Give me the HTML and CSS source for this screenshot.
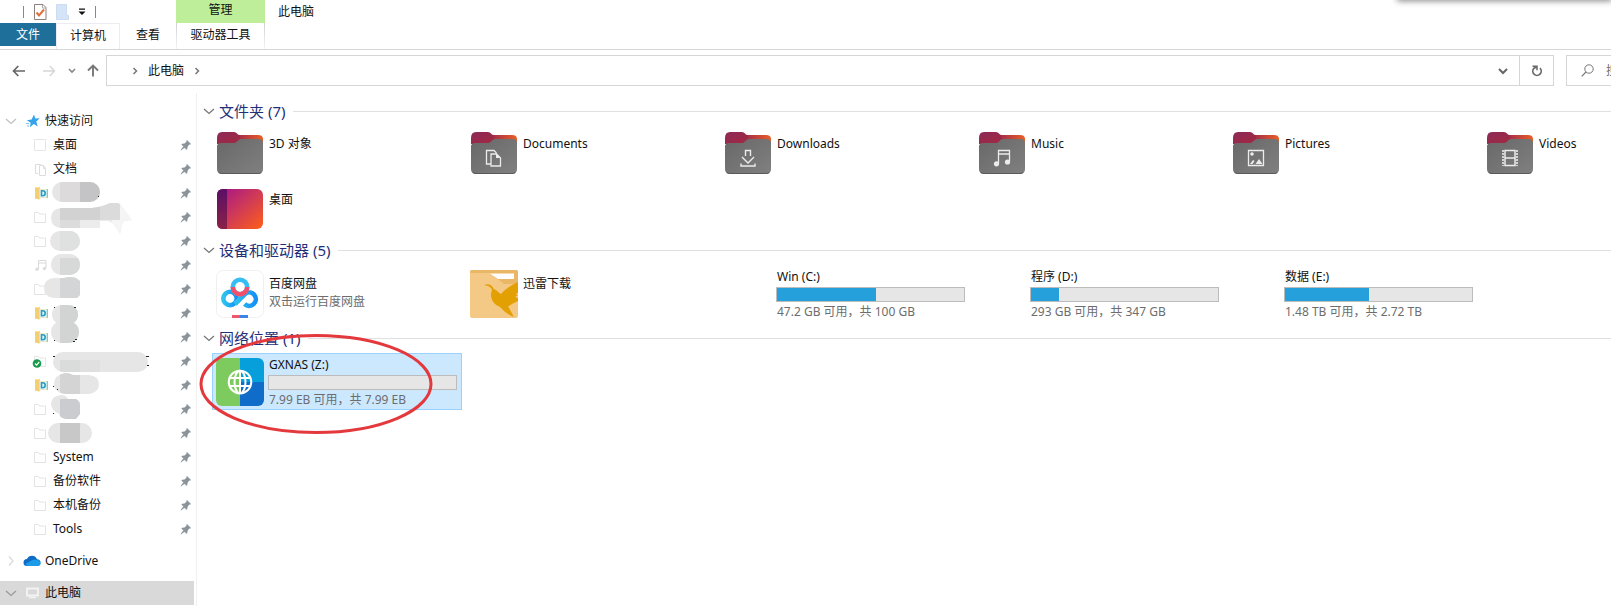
FILE: index.html
```
<!DOCTYPE html>
<html lang="zh-CN">
<head>
<meta charset="utf-8">
<title>此电脑</title>
<link rel="stylesheet" href="styles.css">
</head>
<body>
<svg class="defs" aria-hidden="true">
  <defs>
    <linearGradient id="g-back" x1="0" y1="0" x2="1" y2="0"><stop offset="0" stop-color="#8a2250"/><stop offset=".5" stop-color="#a83048"/><stop offset="1" stop-color="#ea5f25"/></linearGradient>
    <linearGradient id="g-tab" x1="0" y1="0" x2="1" y2="1"><stop offset="0" stop-color="#8c2a58"/><stop offset="1" stop-color="#a3283f"/></linearGradient>
    <linearGradient id="g-front" x1="0" y1="0" x2="1" y2="1"><stop offset="0" stop-color="#686868"/><stop offset="1" stop-color="#808080"/></linearGradient>
    <linearGradient id="g-desk" x1="0" y1="0" x2="1" y2="1"><stop offset="0" stop-color="#a3128c"/><stop offset=".5" stop-color="#cf3a57"/><stop offset="1" stop-color="#ff5f17"/></linearGradient>
    <linearGradient id="g-side" x1="0" y1="0" x2="0" y2="1"><stop offset="0" stop-color="#5b0f66"/><stop offset="1" stop-color="#8a2148"/></linearGradient>
    <linearGradient id="g-cloud" x1="0" y1="0" x2="1" y2="0"><stop offset="0" stop-color="#2fc4ee"/><stop offset="1" stop-color="#1590f5"/></linearGradient>
    <symbol id="folder" viewBox="0 0 48 48">
      <path d="M6 6h36q5 0 5 4v8H1z" fill="url(#g-back)"/>
      <path d="M1 9q0-6 5-6h12q2 0 3 1.500 1 1.500 3 1.500v6l-6 3H1z" fill="url(#g-tab)"/>
      <path d="M1 18q0-4 4-4h13q2 0 3.500-2t3.500-2h18q4 0 4 4v26q0 5-5 5H6q-5 0-5-5z" fill="url(#g-front)"/>
      <path d="M3 43.500q1.500 1 3 1h36q2 0 3-1" fill="none" stroke="#5a5a5a"/>
    </symbol>
    <symbol id="pin" viewBox="0 0 12 12">
      <path d="M7 1l4 4-1 .8-.8-.2L7.500 8l-.2 2.200-.9.600L1.400 5.600l.6-.8L4.500 4.600 6.600 2.600l-.3-.8zM3.500 7.200l1.400 1.400L1 11.500.700 11z" fill="#8c9399"/>
    </symbol>
    <symbol id="dir" viewBox="0 0 14 14"><path d="M.500 2.500h4l1 1.500h6v8.500H.500z" fill="#fff" stroke="#e4e4e4"/></symbol>
    <symbol id="zdir" viewBox="0 0 14 14">
      <path d="M1 1.500l5-.8V3h6v9H6v1.500l-5-1z" fill="#fbdc86"/><path d="M1 1.500l4 1v11l-4-1z" fill="#f3cf74"/>
      <path d="M6 3.500h7v8H6z" fill="#e5f4fa"/><path d="M7.500 4.800v5h1q2.700 0 2.700-2.500T8.500 4.800z" fill="none" stroke="#2f9cc4" stroke-width="1.600"/><path d="M13.300 3v9" stroke="#76c9a4" stroke-width="1.200"/>
    </symbol>
    <symbol id="tune" viewBox="0 0 14 14"><path d="M4.500 11V2.500h7.500V10M4.500 5H12" fill="none" stroke="#d9d9d9"/><circle cx="3" cy="11.300" r="1.700" fill="#ddd"/><circle cx="10.500" cy="10.500" r="1.700" fill="#ddd"/></symbol>
    <symbol id="open" viewBox="0 0 12 12"><path d="M1 4l5 4.500L11 4" fill="none" stroke="currentColor" stroke-width="1.300"/></symbol>
    <symbol id="closed" viewBox="0 0 12 12"><path d="M4 1.500L8 6l-4 4.500" fill="none" stroke="currentColor" stroke-width="1.300"/></symbol>
  </defs>
</svg>

<header class="ribbon">
  <div class="ribbon-left">
    <div class="quick-bar">
      <span class="sep"></span>
      <button class="icon-btn" aria-label="属性"><svg width="14" height="16" viewBox="0 0 14 16"><path d="M1.500.500h8.500l3 3v12H1.500z" fill="#fff" stroke="#8d7f7a"/><path d="M9.500 1v3h3.500" fill="none" stroke="#aaa"/><path d="M3.500 8.500l2.500 3 5-6" fill="none" stroke="#e2703a" stroke-width="2"/></svg></button>
      <button class="icon-btn" aria-label="新建文件夹"><svg width="13" height="16" viewBox="0 0 13 16"><path d="M.500 .500h10v10l2 1v4H.500z" fill="#d5e5f7" stroke="#c9dcf1"/></svg></button>
      <button class="icon-btn" aria-label="自定义快速访问工具栏"><svg width="8" height="8" viewBox="0 0 8 8"><path d="M1 .500h6v1.300H1zM.500 3.500h7L4 7z" fill="#111"/></svg></button>
      <span class="sep"></span>
    </div>
    <div class="tabs">
      <button class="tab tab-file">文件</button>
      <button class="tab tab-computer">计算机</button>
      <button class="tab tab-view">查看</button>
    </div>
  </div>
  <div class="context">
    <div class="context-title">管理</div>
    <button class="tab tab-tools">驱动器工具</button>
  </div>
  <h1 class="window-title">此电脑</h1>
</header>
<div class="window-shadow"></div>

<div class="navbar">
  <div class="nav-buttons">
    <button class="icon-btn" aria-label="后退"><svg width="14" height="12" viewBox="0 0 14 12"><path d="M13 6H1.500M6.300 1L1.500 6l4.800 5" fill="none" stroke="#666" stroke-width="1.700"/></svg></button>
    <button class="icon-btn fwd" aria-label="前进"><svg width="14" height="12" viewBox="0 0 14 12"><path d="M1 6h11.500M7.700 1l4.800 5-4.800 5" fill="none" stroke="#d6d6d6" stroke-width="1.400"/></svg></button>
    <button class="icon-btn recent" aria-label="最近浏览的位置"><svg width="8" height="8" viewBox="0 0 8 8"><path d="M1 2l3 3 3-3" fill="none" stroke="#888" stroke-width="1.600"/></svg></button>
    <button class="icon-btn" aria-label="上移"><svg width="12" height="13" viewBox="0 0 12 13"><path d="M6 12.500V1.500M1 6.500l5-5 5 5" fill="none" stroke="#777" stroke-width="1.900"/></svg></button>
  </div>
  <nav class="address" aria-label="地址">
    <svg class="crumb-sep" width="8" height="8" viewBox="0 0 8 8"><path d="M2.500 1l3 3-3 3" fill="none" stroke="#777" stroke-width="1.500"/></svg>
    <button class="crumb">此电脑</button>
    <svg class="crumb-sep" width="8" height="8" viewBox="0 0 8 8"><path d="M2.500 1l3 3-3 3" fill="none" stroke="#777" stroke-width="1.500"/></svg>
    <button class="icon-btn history" aria-label="以前的位置"><svg width="10" height="8" viewBox="0 0 10 8"><path d="M1 2l4 4 4-4" fill="none" stroke="#666" stroke-width="2"/></svg></button>
    <button class="icon-btn refresh" aria-label="刷新"><svg width="12" height="12" viewBox="0 0 12 12"><path d="M9 3.200a4.200 4.200 0 1 1-6 0L6 1.800" fill="none" stroke="#6a6a6a" stroke-width="1.700"/><path d="M1.500 1.300H6v4" fill="none" stroke="#6a6a6a" stroke-width="1.500"/></svg></button>
  </nav>
  <label class="search">
    <svg width="13" height="13" viewBox="0 0 13 13"><circle cx="8" cy="5" r="4.200" fill="none" stroke="#777"/><path d="M5 8L.700 12.300" stroke="#777" stroke-width="1.200"/></svg>
    <input type="text" placeholder="搜索“此电脑”" aria-label="搜索">
  </label>
</div>

<div class="body">
  <aside class="sidebar">
    <a class="row top" href="#"><svg class="chev" width="12" height="12"><use href="#open"/></svg><svg class="top-icon" width="14" height="14" viewBox="0 0 14 14"><path d="M8 .500l1.300 4 4.400-.2-3.400 3.200 1.400 5L7.800 10l-4 3.300.9-4.600L.800 6.200l4.800-.7z" fill="#35a3ec"/><path d="M0 9.500h3M1 12h2" stroke="#7cc3f3"/></svg>快速访问</a>
    <a class="row" href="#"><svg width="14" height="14" viewBox="0 0 14 14"><path d="M.500 1.500h11v11H.500z" fill="#fff" stroke="#e6e6e6"/></svg>桌面<svg class="pin" width="12" height="12"><use href="#pin"/></svg></a>
    <a class="row" href="#"><svg width="14" height="14" viewBox="0 0 14 14"><path d="M4 11.500H1.500v-9H7M5.500 3.500h4l2 3v7h-6zM9.500 3.500v3h2" fill="none" stroke="#dcdcdc"/></svg>文档<svg class="pin" width="12" height="12"><use href="#pin"/></svg></a>
    <a class="row" href="#" aria-label="文件夹"><svg width="14" height="14"><use href="#zdir"/></svg><svg class="pin" width="12" height="12"><use href="#pin"/></svg></a>
    <a class="row" href="#" aria-label="文件夹"><svg width="14" height="14"><use href="#dir"/></svg><svg class="pin" width="12" height="12"><use href="#pin"/></svg></a>
    <a class="row" href="#" aria-label="文件夹"><svg width="14" height="14"><use href="#dir"/></svg><svg class="pin" width="12" height="12"><use href="#pin"/></svg></a>
    <a class="row" href="#" aria-label="音乐"><svg width="14" height="14"><use href="#tune"/></svg><svg class="pin" width="12" height="12"><use href="#pin"/></svg></a>
    <a class="row" href="#" aria-label="文件夹"><svg width="14" height="14"><use href="#dir"/></svg><svg class="pin" width="12" height="12"><use href="#pin"/></svg></a>
    <a class="row" href="#" aria-label="文件夹"><svg width="14" height="14"><use href="#zdir"/></svg><svg class="pin" width="12" height="12"><use href="#pin"/></svg></a>
    <a class="row" href="#" aria-label="文件夹"><svg width="14" height="14"><use href="#zdir"/></svg><svg class="pin" width="12" height="12"><use href="#pin"/></svg></a>
    <a class="row" href="#" aria-label="文件夹"><svg class="synced" width="14" height="14" viewBox="0 0 14 14"><use href="#dir" width="14" height="14"/><circle cx="3" cy="9.500" r="4.300" fill="#169a4b"/><path d="M1 9.500l1.600 1.600L5.200 8" fill="none" stroke="#fff" stroke-width="1.200"/></svg><svg class="pin" width="12" height="12"><use href="#pin"/></svg></a>
    <a class="row" href="#" aria-label="文件夹"><svg width="14" height="14"><use href="#zdir"/></svg><svg class="pin" width="12" height="12"><use href="#pin"/></svg></a>
    <a class="row" href="#" aria-label="文件夹"><svg width="14" height="14"><use href="#dir"/></svg><svg class="pin" width="12" height="12"><use href="#pin"/></svg></a>
    <a class="row" href="#" aria-label="文件夹"><svg width="14" height="14"><use href="#dir"/></svg><svg class="pin" width="12" height="12"><use href="#pin"/></svg></a>
    <a class="row" href="#"><svg width="14" height="14"><use href="#dir"/></svg>System<svg class="pin" width="12" height="12"><use href="#pin"/></svg></a>
    <a class="row" href="#"><svg width="14" height="14"><use href="#dir"/></svg>备份软件<svg class="pin" width="12" height="12"><use href="#pin"/></svg></a>
    <a class="row" href="#"><svg width="14" height="14"><use href="#dir"/></svg>本机备份<svg class="pin" width="12" height="12"><use href="#pin"/></svg></a>
    <a class="row" href="#"><svg width="14" height="14"><use href="#dir"/></svg>Tools<svg class="pin" width="12" height="12"><use href="#pin"/></svg></a>
    <a class="row top spaced" href="#"><svg class="chev faint" width="12" height="12"><use href="#closed"/></svg><svg class="top-icon wide" width="18" height="12" viewBox="0 0 18 12"><path d="M4 11Q.500 11 .500 7.500T4 4Q5.500.800 9 .800t5 3.400q3.500.3 3.500 3.500T14 11z" fill="#0f6cc4"/><path d="M5.500 11q-3-.3-2.500-2.500L9.500 5q2-1 4 0 4 0 4 3t-3.500 3z" fill="#1b9be8"/></svg>OneDrive</a>
    <a class="row top spaced selected" href="#"><svg class="chev dark" width="12" height="12"><use href="#open"/></svg><svg class="top-icon" width="14" height="12" viewBox="0 0 14 12"><path d="M1 1.500h11v7H1z" fill="#d9d9d9" stroke="#f3f3f3" stroke-width="1.800"/><path d="M3 10.500h7" stroke="#f3f3f3" stroke-width="1.500"/></svg>此电脑</a>

    <!-- Mosaic over private folder names -->
    <svg class="mosaic" width="150" height="270" viewBox="0 180 150 270" aria-hidden="true">
      <clipPath id="blobs">
        <rect x="52" y="182" width="48" height="20" rx="10"/>
        <path d="M61 208H92Q102 207 110 203H118Q121 204 123 208L132 220 124 221 122 224 120 234 113 223 108 221H100V228H61Q51 227 51 218T61 208z"/>
        <rect x="50" y="231" width="30" height="20" rx="10"/>
        <rect x="51" y="254" width="29" height="21" rx="10"/>
        <path d="M54 278h10q6-2 12 0l4 3v14l-3 3H54q-10-1-10-10t10-10z"/>
        <rect x="52" y="305" width="26" height="19" rx="9"/>
        <rect x="51" y="321" width="28" height="22" rx="11"/>
        <rect x="53" y="352" width="95" height="20" rx="10"/>
        <path d="M65 373q5 0 8 2h16q10 1 10 9t-10 10H67q-13-1-13-10t11-11z"/>
        <path d="M61 395q5 0 7 4h8q4 2 4 6v9l-4 5H66q-6-1-7-5-8-4-8-10 0-8 10-9z"/>
        <rect x="48" y="423" width="44" height="20" rx="10"/>
      </clipPath>
      <g clip-path="url(#blobs)">
        <path d="M40 180h110v270H40z" fill="#e6e6e6"/>
        <path d="M60 180h20v23H60z" fill="#dcdadb"/><path d="M80 180h20v23H80z" fill="#c4c4c6"/>
        <path d="M60 203h40v17H60z" fill="#d2d2d3"/><path d="M60 220h20v9H60z" fill="#dcdcdd"/><path d="M100 203h20v17h-20z" fill="#dbdbdc"/><path d="M80 220h32v9H80z" fill="#ececec"/><path d="M120 203h15v35h-23v-18h8z" fill="#f5f5f5"/>
        <path d="M60 230h20v22H60z" fill="#dfe0e0"/><path d="M60 258h20v18H60z" fill="#d7d8d8"/>
        <path d="M60 277h20v22H60z" fill="#d4d5d6"/><path d="M60 304h20v40H60z" fill="#d2d3d3"/>
        <path d="M60 360h20v12H60z" fill="#dadbdb"/><path d="M80 360h20v12H80z" fill="#e0e0e0"/>
        <path d="M60 372h20v22H60z" fill="#d4d4d5"/><path d="M60 399h20v21H60z" fill="#cbccd0"/><path d="M60 422h20v22H60z" fill="#c8c8c8"/>
      </g>
      <path d="M98 196h1v1h-1zM54 307h1v1h-1zM74 307h2v1h-2zM75 339h2v1h-2zM73 341h2v1h-2zM54 340h1v1h-1zM53 356h2v1h-2zM146 356h3v1h-3zM147 365h2v1h-2zM53 386h1v1h-1zM57 389h1v1h-1zM53 413h1v1h-1z" fill="#222"/>
    </svg>
  </aside>

  <main class="content">
    <section class="group">
      <h2 class="group-title"><svg width="12" height="12"><use href="#open"/></svg>文件夹 (7)</h2>
      <div class="grid folders">
        <div class="tile"><svg class="icon" width="48" height="48"><use href="#folder"/></svg><span class="name">3D 对象</span></div>
        <div class="tile"><svg class="icon" width="48" height="48" viewBox="0 0 48 48"><use href="#folder" width="48" height="48"/><path d="M20.500 35H16.500V21.500H24l2.500 2.500M21 25h5.500l4 4v8H21z" fill="none" stroke="#ececec" stroke-width="1.300"/><path d="M26 24.500V29h4.500z" fill="#ececec"/></svg><span class="name">Documents</span></div>
        <div class="tile"><svg class="icon" width="48" height="48" viewBox="0 0 48 48"><use href="#folder" width="48" height="48"/><path d="M21.500 27v-5.500h5V27M18 28l6 6 6-6M17 34.500V37h14v-2.500" fill="none" stroke="#ececec" stroke-width="1.400"/></svg><span class="name">Downloads</span></div>
        <div class="tile"><svg class="icon" width="48" height="48" viewBox="0 0 48 48"><use href="#folder" width="48" height="48"/><path d="M20.500 34.500V21.500h11v11M20.500 25h11" fill="none" stroke="#ececec" stroke-width="1.300"/><circle cx="18.500" cy="34.800" r="2.600" fill="#ececec"/><circle cx="29.500" cy="33" r="2.600" fill="#ececec"/></svg><span class="name">Music</span></div>
        <div class="tile"><svg class="icon" width="48" height="48" viewBox="0 0 48 48"><use href="#folder" width="48" height="48"/><path d="M16.500 21.500h15v15h-15z" fill="none" stroke="#ececec" stroke-width="1.300"/><circle cx="20" cy="25" r="1.800" fill="#ececec"/><path d="M18 35l3-4 1.500 1-2 3zM23.500 35l3.500-5 3.500 5z" fill="#ececec"/></svg><span class="name">Pictures</span></div>
        <div class="tile"><svg class="icon" width="48" height="48" viewBox="0 0 48 48"><use href="#folder" width="48" height="48"/><path d="M19 21.500h10v15H19zM19 29h10" fill="none" stroke="#ececec" stroke-width="1.500"/><path d="M17 21v16M31 21v16" stroke="#ececec" stroke-width="1.600" stroke-dasharray="2 1"/></svg><span class="name">Videos</span></div>
        <div class="tile"><svg class="icon" width="48" height="48" viewBox="0 0 48 48"><rect x="1" y="4" width="46" height="40" rx="6" fill="url(#g-desk)"/><path d="M11 4H7Q1 4 1 10v28q0 6 6 6h4z" fill="url(#g-side)"/></svg><span class="name">桌面</span></div>
      </div>
    </section>

    <section class="group">
      <h2 class="group-title"><svg width="12" height="12"><use href="#open"/></svg>设备和驱动器 (5)</h2>
      <div class="grid devices">
        <div class="tile"><svg class="icon" width="48" height="48" viewBox="0 0 48 48"><rect x=".5" y=".5" width="47" height="47" rx="7" fill="#fff" stroke="#f0f0f0"/><g fill="none" stroke-width="4.600"><circle cx="14" cy="28.500" r="6.700" stroke="url(#g-cloud)"/><path d="M28.500 34a6.700 6.700 0 1 0 1-10.500L19 34" stroke="url(#g-cloud)"/><circle cx="24" cy="17" r="7.200" stroke="#36bdf2"/><path d="M16.800 17a7.200 7.200 0 0 0 14.400 0" stroke="#f0506c"/></g><path d="M16 45h8v3h-8z" fill="#f0566c"/><path d="M24 45h8v3h-8z" fill="#3b85e8"/></svg><span class="name">百度网盘</span><span class="detail">双击运行百度网盘</span></div>
        <div class="tile"><svg class="icon" width="48" height="48" viewBox="0 0 48 48"><rect width="48" height="48" rx="2" fill="#f4c986"/><path d="M0 2q0-2 2-2h44q2 0 2 2v12H34L20 3H0z" fill="#e9b765"/><path d="M20 3.500h24v5.500H28z" fill="#fff"/><path d="M14 15q5-2 8 1 1 3 4 4 3 3 5 4 6-7 17-12v11l-3 1 3 1-3 2 3 1v3l-6 3q-2 2-4 2l6 11q-8-3-14-10-8-3-9-11 0-4 1-6-1-4-8-5z" fill="#e3a003"/></svg><span class="name">迅雷下载</span></div>
        <div class="tile drive"><span class="name">Win (C:)</span><span class="bar"><span class="fill" style="width:53%"></span></span><span class="detail">47.2 GB 可用，共 100 GB</span></div>
        <div class="tile drive"><span class="name">程序 (D:)</span><span class="bar"><span class="fill" style="width:15%"></span></span><span class="detail">293 GB 可用，共 347 GB</span></div>
        <div class="tile drive"><span class="name">数据 (E:)</span><span class="bar"><span class="fill" style="width:45%"></span></span><span class="detail">1.48 TB 可用，共 2.72 TB</span></div>
      </div>
    </section>

    <section class="group">
      <h2 class="group-title"><svg width="12" height="12"><use href="#open"/></svg>网络位置 (1)</h2>
      <div class="grid">
        <div class="tile drive picked">
          <svg class="icon" width="48" height="48" viewBox="0 0 48 48"><clipPath id="net"><rect width="48" height="48" rx="6"/></clipPath><g clip-path="url(#net)"><path d="M0 0h24v48H0z" fill="#7dca5e"/><path d="M24 0h24v24H24z" fill="#069fdb"/><path d="M24 24h24v24H24z" fill="#0f6cc8"/></g><g fill="none" stroke="#fff" stroke-width="2"><circle cx="24" cy="24" r="11.300"/><ellipse cx="24" cy="24" rx="5.500" ry="11.300"/><path d="M24 12.500v23M13.500 20h21M13.500 28h21"/></g></svg>
          <span class="name">GXNAS (Z:)</span><span class="bar"></span><span class="detail">7.99 EB 可用，共 7.99 EB</span>
          <svg class="ring" width="234" height="102" viewBox="0 0 234 102" aria-hidden="true"><ellipse cx="117" cy="51" rx="115" ry="48.500" fill="none" stroke="#e4393c" stroke-width="3"/></svg>
        </div>
      </div>
    </section>
  </main>
</div>
</body>
</html>
```

FILE: styles.css
```
* { box-sizing: border-box; }

html, body {
  height: 100%;
  margin: 0;
  overflow: hidden;
}

body {
  display: flex;
  flex-direction: column;
  background: #fff;
  color: #111;
  font: 12px/16px "Noto Sans", "Noto Sans CJK SC", sans-serif;
}

button, input {
  margin: 0;
  padding: 0;
  border: 0;
  background: none;
  color: inherit;
  font: inherit;
}

a { color: inherit; text-decoration: none; }
svg { display: block; flex: none; }
.defs { position: absolute; width: 0; height: 0; }
.icon-btn { display: flex; align-items: center; justify-content: center; }

/* Ribbon */
.ribbon {
  display: flex;
  flex: none;
  height: 50px;
  border-bottom: 1px solid #d6d6d8;
}
.ribbon-left { width: 176px; }
.quick-bar {
  display: flex;
  align-items: center;
  gap: 9px;
  height: 23px;
  padding-left: 23px;
}
.sep { width: 1px; height: 12px; background: #888; }
.tabs { display: flex; height: 26px; }
.tab { padding-bottom: 2px; text-align: center; }
.tab-file { width: 56px; height: 23px; padding: 0; background: #1f6f9b; color: #fff; }
.tab-computer { width: 64px; border: 1px solid #ececf2; border-bottom: 0; }
.tab-view { flex: 1; }
.context { display: flex; flex-direction: column; width: 89px; }
.context-title {
  height: 23px;
  padding-top: 2px;
  background: #beee99;
  text-align: center;
}
.tab-tools {
  height: 26px;
  border: solid;
  border-width: 0 1px;
  border-image: linear-gradient(#cfcfd6, #f6f6f6) 1;
}
.window-title { margin: 4px 0 0 13px; font: inherit; }
.window-shadow {
  position: absolute;
  top: -8px;
  right: 0;
  left: 1398px;
  height: 8px;
  box-shadow: 0 0 6px 1px #888;
}

/* Navigation */
.navbar {
  display: flex;
  flex: none;
  padding-top: 5px;
}
.nav-buttons {
  display: flex;
  align-items: center;
  width: 106px;
  padding-left: 12px;
}
.fwd { margin-left: 16px; }
.recent { margin: 0 11px 0 12px; }
.address {
  display: flex;
  flex: 1;
  align-items: center;
  height: 31px;
  padding-left: 24px;
  border: 1px solid #d6d6d6;
}
.crumb { margin: 0 9px; }
.history { height: 100%; margin-left: auto; padding: 0 11px; }
.refresh { width: 34px; height: 100%; border-left: 1px solid #d6d6d6; }
.search {
  display: flex;
  align-items: center;
  width: 45px;
  height: 31px;
  margin-left: 12px;
  padding-left: 14px;
  overflow: hidden;
  border: 1px solid #d6d6d6;
  border-right: 0;
}
.search input { flex: 1; min-width: 0; margin-left: 12px; outline: 0; }
.search input::placeholder { color: #6d6d6d; opacity: 1; }

/* Sidebar */
.body { display: flex; flex: 1; min-height: 0; padding-top: 7px; }
.sidebar {
  position: relative;
  width: 197px;
  flex: none;
  padding: 16px 2px 0 0;
  border-right: 1px solid #f0f0f0;
}
.row {
  display: flex;
  align-items: center;
  gap: 5px;
  height: 24px;
  padding: 0 2px 0 34px;
}
.row.top { padding-left: 5px; }
.row.spaced { margin-top: 8px; }
.row.selected { background: #d9d9d9; }
.chev { color: #c0c0c0; }
.chev.faint { color: #dadada; }
.chev.dark { color: #999; }
.top-icon { margin: 0 0 0 4px; }
.top-icon.wide { margin: 0 -1px 0 1px; }
.synced { overflow: visible; }
.pin { margin-left: auto; }
.mosaic { position: absolute; top: 87px; left: 0; }

/* Content */
.content {
  flex: 1;
  min-width: 0;
  padding: 5px 0 0 6px;
}
.group-title {
  display: flex;
  align-items: center;
  gap: 4px;
  height: 26px;
  margin: 0 0 2px;
  color: #1f3079;
  font-size: 15px;
  font-weight: 400;
  line-height: 24px;
}
.group-title svg { color: #777; }
.group-title::after {
  content: "";
  flex: 1;
  height: 1px;
  margin-left: 4px;
  background: #e0e0e0;
}
.grid {
  display: grid;
  grid-template-columns: repeat(5, 250px) minmax(0, 250px);
  gap: 1px 4px;
  padding-left: 9px;
}
.devices { padding-bottom: 3px; }
.tile {
  position: relative;
  display: grid;
  grid-template-columns: 48px minmax(0, 189px);
  grid-auto-rows: 16px;
  column-gap: 4px;
  align-content: start;
  height: 57px;
  padding: 10px 0 0 3px;
  border: 1px solid transparent;
}
.folders .tile { height: 55px; padding-top: 9px; }
.icon { grid-row: 1 / span 3; margin-top: -6px; }
.folders .icon { margin-top: -7px; }
.name, .detail {
  grid-column: 2;
  padding-left: 1px;
  white-space: nowrap;
}
.detail { padding-top: 2px; color: #6d6d6d; }
.tile.drive { grid-template-rows: 16px 19px 16px; padding-top: 3px; }
.drive .icon { margin-top: 1px; }
.drive .detail { padding-top: 0; }
.bar {
  grid-column: 2;
  height: 15px;
  margin-top: 2px;
  border: 1px solid #bcbcbc;
  background: #e6e6e6;
}
.fill { display: block; height: 100%; background: #26a0da; }
.tile.picked { border-color: #99d1ff; background: #cce8ff; }
.ring { position: absolute; top: -21px; left: -14px; }
```
